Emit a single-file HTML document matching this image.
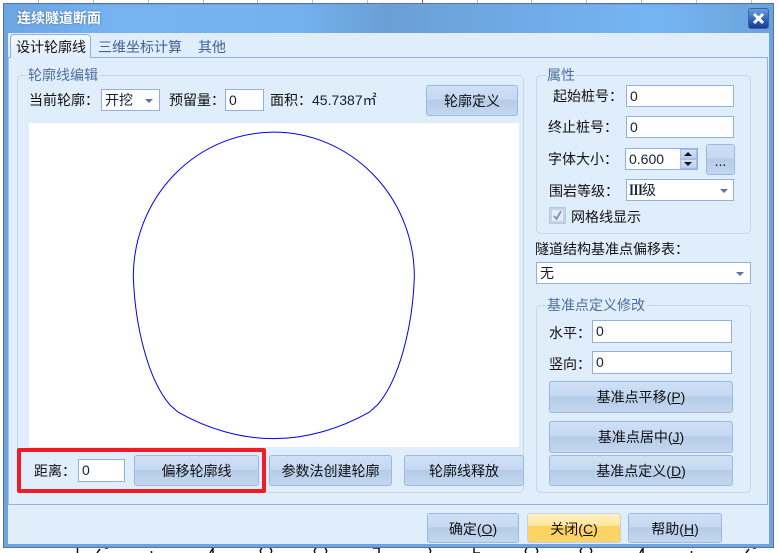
<!DOCTYPE html>
<html><head><meta charset="utf-8"><style>
html,body{margin:0;padding:0;width:779px;height:553px;overflow:hidden;background:#fff}
body{position:relative;font-family:"Liberation Sans","WenQuanYi Zen Hei","Noto Sans CJK SC",sans-serif;font-size:14px;color:#111}
.a{position:absolute;box-sizing:border-box}
.t{position:absolute;white-space:nowrap;line-height:18px;height:18px}
.i{position:absolute;box-sizing:border-box;background:#fff;border:1px solid #8fb0e0;line-height:20px;padding-left:3px;color:#123}
.b{position:absolute;box-sizing:border-box;border:1px solid #9db9e0;border-radius:3px;text-align:center;background:linear-gradient(#cfe0f6 0,#c6d9f2 45%,#b5cbe7 50%,#c4d7f0 100%);white-space:nowrap;color:#111}
.g{position:absolute;box-sizing:border-box;border:1px solid #c5d8ea;border-radius:5px}
.l{position:absolute;background:#e0edfb;color:#4f6f9c;line-height:16px;padding:0 1px;white-space:nowrap}
.v{position:absolute;top:0;width:1px;height:3px;background:#bbb}
.arr{position:absolute;width:0;height:0;border-left:4px solid transparent;border-right:4px solid transparent;border-top:4px solid #5577aa}
u{text-decoration:underline}
</style></head><body>
<div class="v" style="left:38px"></div><div class="v" style="left:93px"></div><div class="v" style="left:148px"></div><div class="v" style="left:203px"></div><div class="v" style="left:257px"></div><div class="v" style="left:312px"></div><div class="v" style="left:367px"></div><div class="v" style="left:422px;background:#f33"></div><div class="v" style="left:477px"></div><div class="v" style="left:531px"></div><div class="v" style="left:586px"></div><div class="v" style="left:641px"></div><div class="v" style="left:696px"></div><div class="v" style="left:751px"></div>

<div class="a" style="left:3px;top:3px;width:771px;height:545px;background:#6ea3dc;border:1px solid #4d74b4"></div>
<div class="a" style="left:4px;top:5px;width:769px;height:28px;background:linear-gradient(90deg,#6ca5e2 0,#76b3f1 14%,#74b2ef 38%,#6a9fd5 50%,#6fa9e4 65%,#75b5f4 85%,#6ca2d8 100%)"></div>
<div class="t" style="left:17px;top:9px;color:#fff;font-weight:bold;text-shadow:0 0 2px #3f6fae">连续隧道断面</div>
<div class="a" style="left:748px;top:8px;width:21px;height:21px;border-radius:3px;background:linear-gradient(#6f9fdc,#2f5fb4 60%,#17389a);border:1px solid #3a62a8">
<svg width="19" height="19" style="position:absolute;left:0;top:0"><path d="M5 5L14 14M14 5L5 14" stroke="#fff" stroke-width="3"/></svg></div>

<div class="a" style="left:8px;top:33px;width:761px;height:511px;background:#e0edfb"></div>
<div class="a" style="left:8px;top:57px;width:760px;height:448px;border:1px solid #8fb0e0;border-left-color:#a8c4e8"></div>
<div class="a" style="left:10px;top:34px;width:81px;height:24px;border:1px solid #8fb0e0;border-bottom:none;border-radius:4px 4px 0 0;background:linear-gradient(#f4f9ff,#e0edfb)"></div>
<div class="t" style="left:16px;top:38px">设计轮廓线</div>
<div class="t" style="left:98px;top:38px;color:#3f6396">三维坐标计算</div>
<div class="t" style="left:198px;top:38px;color:#3f6396">其他</div>

<div class="g" style="left:17px;top:75px;width:507px;height:418px"></div>
<div class="l" style="left:27px;top:67px">轮廓线编辑</div>
<div class="t" style="left:29px;top:91px">当前轮廓：</div>
<div class="i" style="left:101px;top:89px;width:59px;height:22px">开挖</div>
<div class="arr" style="left:145px;top:99px"></div>
<div class="t" style="left:169px;top:91px">预留量：</div>
<div class="i" style="left:225px;top:89px;width:39px;height:22px">0</div>
<div class="t" style="left:270px;top:91px">面积：<span style="color:#123;margin-left:0">45.7387㎡</span></div>
<div class="b" style="left:426px;top:85px;width:92px;height:31px;line-height:30px">轮廓定义</div>

<div class="a" style="left:29px;top:123px;width:490px;height:324px;background:#fff"></div>
<svg class="a" style="left:120px;top:120px" width="310" height="330" viewBox="0 0 930 990"><path fill="none" stroke="#0000f0" stroke-width="3" d="M40 470A421 433 0 0 1 883 470C878 620 838 780 772 855L747 877C662 925 562 956 461 956C360 956 260 925 175 877L150 855C85 780 45 620 40 470Z"/></svg>

<div class="a" style="left:17px;top:448px;width:249px;height:45px;border:4px solid #ee1c25;border-radius:2px"></div>
<div class="t" style="left:34px;top:462px">距离：</div>
<div class="i" style="left:78px;top:459px;width:47px;height:23px">0</div>
<div class="b" style="left:134px;top:455px;width:125px;height:31px;line-height:30px">偏移轮廓线</div>
<div class="b" style="left:269px;top:455px;width:123px;height:31px;line-height:30px">参数法创建轮廓</div>
<div class="b" style="left:404px;top:455px;width:120px;height:31px;line-height:30px">轮廓线释放</div>

<div class="g" style="left:536px;top:75px;width:215px;height:159px"></div>
<div class="l" style="left:546px;top:67px">属性</div>
<div class="t" style="left:553px;top:87px">起始桩号：</div>
<div class="i" style="left:626px;top:85px;width:108px;height:22px">0</div>
<div class="t" style="left:548px;top:118px">终止桩号：</div>
<div class="i" style="left:626px;top:116px;width:108px;height:22px">0</div>
<div class="t" style="left:548px;top:150px">字体大小：</div>
<div class="i" style="left:625px;top:148px;width:73px;height:22px">0.600</div>
<div class="a" style="left:680px;top:149px;width:17px;height:10px;background:linear-gradient(#d3e2f6,#bcd0ea);border:1px solid #a8c0e0"></div>
<div class="a" style="left:680px;top:159px;width:17px;height:10px;background:linear-gradient(#d3e2f6,#bcd0ea);border:1px solid #a8c0e0"></div>
<div class="arr" style="left:684px;top:152px;border-top:none;border-bottom:4px solid #111"></div>
<div class="arr" style="left:684px;top:162px;border-top-color:#111"></div>
<div class="b" style="left:706px;top:144px;width:29px;height:31px;line-height:32px">...</div>
<div class="t" style="left:549px;top:182px">围岩等级：</div>
<div class="i" style="left:626px;top:179px;width:108px;height:22px;padding-left:2px"><span style="font-family:'Noto Serif CJK SC',serif;font-weight:bold;font-size:14px;margin-right:-1px">Ⅲ</span>级</div>
<div class="arr" style="left:720px;top:189px"></div>
<div class="a" style="left:549px;top:207px;width:17px;height:17px;background:#c4d4e8;border:1px solid #b5c8e0">
<svg width="15" height="15" style="position:absolute;left:0;top:0"><rect x="2" y="2" width="11" height="11" fill="#e8eef6"/><path d="M4 8L6.500 11 11 3" fill="none" stroke="#8a9bb0" stroke-width="2"/></svg></div>
<div class="t" style="left:571px;top:208px">网格线显示</div>

<div class="t" style="left:535px;top:240px">隧道结构基准点偏移表：</div>
<div class="i" style="left:536px;top:262px;width:215px;height:22px">无</div>
<div class="arr" style="left:736px;top:272px"></div>

<div class="g" style="left:536px;top:305px;width:215px;height:188px"></div>
<div class="l" style="left:546px;top:297px">基准点定义修改</div>
<div class="t" style="left:549px;top:324px">水平：</div>
<div class="i" style="left:592px;top:320px;width:140px;height:23px">0</div>
<div class="t" style="left:549px;top:355px">竖向：</div>
<div class="i" style="left:592px;top:351px;width:140px;height:23px">0</div>
<div class="b" style="left:549px;top:381px;width:184px;height:32px;line-height:30px">基准点平移(<u>P</u>)</div>
<div class="b" style="left:549px;top:421px;width:184px;height:32px;line-height:30px">基准点居中(<u>J</u>)</div>
<div class="b" style="left:549px;top:455px;width:184px;height:31px;line-height:30px">基准点定义(<u>D</u>)</div>

<div class="b" style="left:427px;top:513px;width:92px;height:30px;line-height:30px">确定(<u>O</u>)</div>
<div class="b" style="left:527px;top:513px;width:94px;height:30px;line-height:30px;background:linear-gradient(#fff0c4 0,#ffe79f 40%,#fdd260 45%,#fdd46a 100%);border-color:#c8cfe0">关闭(<u>C</u>)</div>
<div class="b" style="left:628px;top:513px;width:94px;height:30px;line-height:30px">帮助(<u>H</u>)</div>

<svg class="a" style="left:0;top:548px" width="779" height="5"><path fill="none" stroke="#111" stroke-width="1.500" d="M77.500 0V5M97 5L100 1M105 0H108M151.500 3V5M210 5L213 0 213 5M262 0C260 2 260 3 261 5M270 0C272 2 272 3 271 5M316 0C314 2 314 3 315 5M325 0C327 2 327 3 326 5M373 0H380M379 0V5M429 0C431 2 431 3 430 5M474 0V5H480M527 0C525 2 525 3 526 5M536 0C538 2 538 3 537 5M582 0C580 2 580 3 581 5M590 0C592 2 592 3 591 5M640 5L643 0 643 5M691.500 3V5M746 5L749 1M753 0H756"/></svg>
</body></html>
